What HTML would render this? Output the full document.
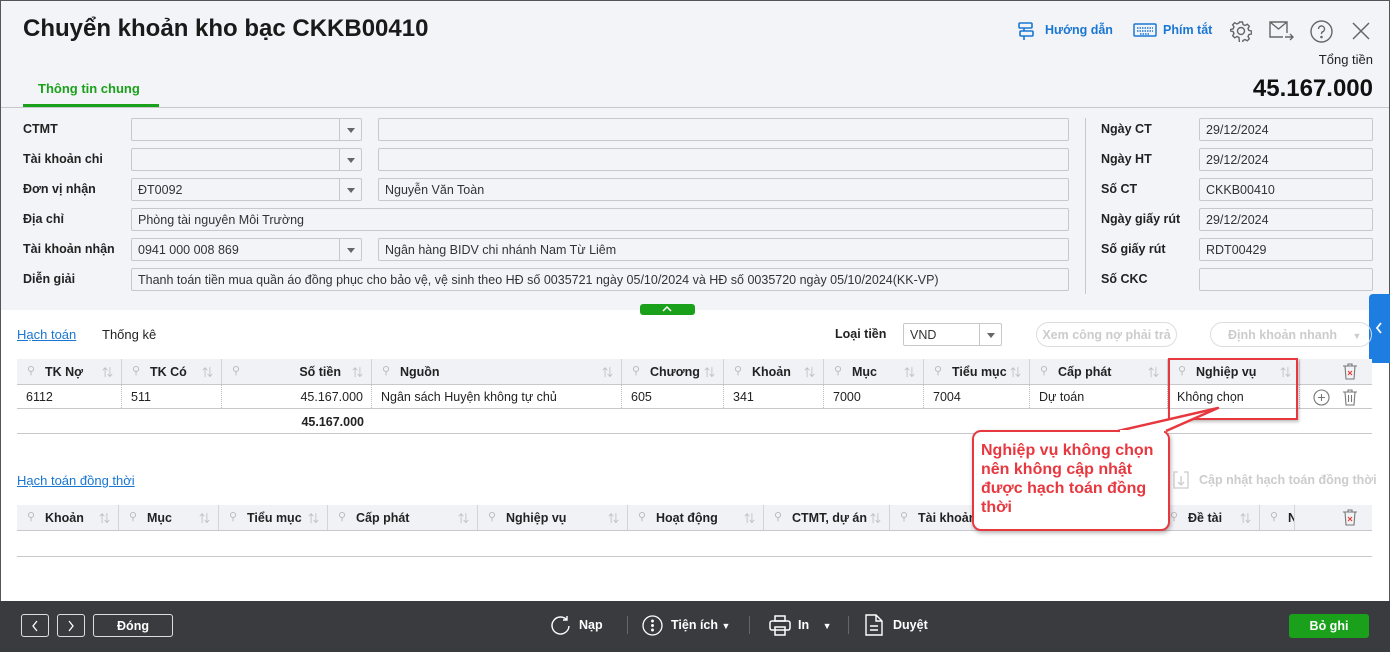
<!DOCTYPE html>
<html><head><meta charset="utf-8">
<style>
*{box-sizing:border-box;margin:0;padding:0}
body{width:1390px;height:652px;overflow:hidden;font-family:"Liberation Sans","Noto Sans CJK SC",sans-serif;font-size:12.5px;color:#222;background:#fff;position:relative}
.a{position:absolute}
.top{left:0;top:0;width:1390px;height:310px;background:#f3f4f8;border-top:1px solid #555;border-left:1px solid #555;border-right:1px solid #555}
.lbl{font-weight:bold;font-size:12.5px;color:#222}
.inp{height:23px;border:1px solid #c8c8cc;border-radius:2px;background:#f3f4f8;padding:4px 6px;font-size:12.5px;color:#333;white-space:nowrap;overflow:hidden}
.combo .arr{position:absolute;right:0;top:0;width:22px;height:21px;border-left:1px solid #c8c8cc}
.combo .arr:after{content:"";position:absolute;left:7px;top:9px;border-left:4px solid transparent;border-right:4px solid transparent;border-top:5px solid #666}
.th{height:26px;background:#f1f2f6;border-bottom:1px solid #c8c8cc;font-weight:bold;font-size:12.5px}
.c{position:absolute;top:0;height:100%;border-right:1px solid #d4d4d8;padding:6px 0 0 28px;white-space:nowrap;overflow:hidden}
.c .pin{position:absolute;left:10px;top:5px;color:#bbb;font-weight:normal;font-size:11px}
.c .srt{position:absolute;right:8px;top:5px;color:#bbb;font-weight:normal;font-size:11px}
.row{height:24px;border-bottom:1px solid #c8c8cc;font-size:12.5px}
.d{position:absolute;top:0;height:100%;border-right:1px dotted #bbb;padding:5px 0 0 9px;white-space:nowrap}
.foot{left:0;top:601px;width:1390px;height:51px;background:#3a3b3f}
.fb{border:1px solid #ddd;border-radius:3px;color:#fff;height:23px;top:614px;text-align:center;font-weight:bold;font-size:12.5px;padding-top:4px}
.ft{color:#fff;font-weight:bold;top:618px;font-size:12.5px}
.sep{top:616px;width:1px;height:18px;background:#666}
</style></head><body>
<div class="a top"></div>
<div class="a" style="left:0;top:0;width:1px;height:601px;background:#555"></div>
<div class="a" style="right:0;top:0;width:1px;height:601px;background:#555"></div>

<div class="a" style="left:23px;top:15px;font-size:24px;font-weight:bold;color:#1a1a1a">Chuyển khoản kho bạc CKKB00410</div>
<svg class="a" style="left:1016px;top:21px" width="20" height="20" viewBox="0 0 20 20" fill="none" stroke="#1976d2" stroke-width="1.6"><rect x="3" y="2" width="13" height="5" rx="1"/><rect x="4" y="10" width="13" height="5" rx="1"/><path d="M8 7v3M8 15v4"/></svg>
<div class="a" style="left:1045px;top:23px;color:#1976d2;font-weight:bold;font-size:12.5px">Hướng dẫn</div>
<svg class="a" style="left:1133px;top:23px" width="24" height="14" viewBox="0 0 24 14" fill="none" stroke="#1976d2" stroke-width="1.5"><rect x="1" y="1" width="22" height="12" rx="1"/><path d="M4 5h16M4 8h16M7 11h10" stroke-dasharray="1.5 1"/></svg>
<div class="a" style="left:1163px;top:23px;color:#1976d2;font-weight:bold;font-size:12.5px">Phím tắt</div>
<svg class="a" style="left:1230px;top:20px" width="22" height="22" viewBox="0 0 22 22" fill="none" stroke="#666" stroke-width="1.4"><circle cx="11" cy="11" r="3.5"/><path d="M9.5 2h3l.5 2.5 2 1 2.3-1.3 2 2-1.3 2.3 1 2 2.5.5v3l-2.5.5-1 2 1.3 2.3-2 2-2.3-1.3-2 1-.5 2.5h-3L9 17.5l-2-1-2.3 1.3-2-2L4 13.5l-1-2L.5 11V9.5L3 9l1-2-1.3-2.3 2-2L7 4l2-1z"/></svg>
<svg class="a" style="left:1269px;top:21px" width="25" height="20" viewBox="0 0 25 20" fill="none" stroke="#666" stroke-width="1.4"><path d="M18 12V1H1v15h13M1 1l8.5 7L18 1M16 16h8M21 13l3 3-3 3"/></svg>
<svg class="a" style="left:1310px;top:20px" width="23" height="23" viewBox="0 0 23 23" fill="none" stroke="#666" stroke-width="1.4"><circle cx="11.5" cy="11.5" r="10.5"/><path d="M8.5 9a3 3 0 1 1 4 2.8c-1 .4-1 1-1 2.2"/><circle cx="11.5" cy="17" r=".6" fill="#666"/></svg>
<svg class="a" style="left:1352px;top:22px" width="18" height="18" viewBox="0 0 18 18" stroke="#666" stroke-width="1.5"><path d="M1 1l16 16M17 1L1 17"/></svg>
<div class="a" style="right:17px;top:52px;font-size:13px">Tổng tiền</div>
<div class="a" style="right:17px;top:75px;font-size:24px;font-weight:bold;color:#111">45.167.000</div>

<div class="a" style="left:38px;top:81px;color:#1aa01a;font-weight:bold;font-size:13px">Thông tin chung</div>
<div class="a" style="left:23px;top:104px;width:136px;height:3px;background:#1aa01a"></div>
<div class="a" style="left:1px;top:107px;width:1388px;height:1px;background:#c8c8cc"></div>

<div class="a lbl" style="left:23px;top:122px">CTMT</div>
<div class="a lbl" style="left:23px;top:152px">Tài khoản chi</div>
<div class="a lbl" style="left:23px;top:182px">Đơn vị nhận</div>
<div class="a lbl" style="left:23px;top:212px">Địa chỉ</div>
<div class="a lbl" style="left:23px;top:242px">Tài khoản nhận</div>
<div class="a lbl" style="left:23px;top:272px">Diễn giải</div>

<div class="a inp combo" style="left:131px;top:118px;width:231px"><span class="arr"></span></div>
<div class="a inp" style="left:378px;top:118px;width:691px"></div>
<div class="a inp combo" style="left:131px;top:148px;width:231px"><span class="arr"></span></div>
<div class="a inp" style="left:378px;top:148px;width:691px"></div>
<div class="a inp combo" style="left:131px;top:178px;width:231px">ĐT0092<span class="arr"></span></div>
<div class="a inp" style="left:378px;top:178px;width:691px">Nguyễn Văn Toàn</div>
<div class="a inp" style="left:131px;top:208px;width:938px">Phòng tài nguyên Môi Trường</div>
<div class="a inp combo" style="left:131px;top:238px;width:231px">0941 000 008 869<span class="arr"></span></div>
<div class="a inp" style="left:378px;top:238px;width:691px">Ngân hàng BIDV chi nhánh Nam Từ Liêm</div>
<div class="a inp" style="left:131px;top:268px;width:938px">Thanh toán tiền mua quần áo đồng phục cho bảo vệ, vệ sinh theo HĐ số 0035721 ngày 05/10/2024 và HĐ số 0035720 ngày 05/10/2024(KK-VP)</div>

<div class="a" style="left:1085px;top:118px;width:1px;height:176px;background:#c8c8cc"></div>
<div class="a lbl" style="left:1101px;top:122px">Ngày CT</div>
<div class="a lbl" style="left:1101px;top:152px">Ngày HT</div>
<div class="a lbl" style="left:1101px;top:182px">Số CT</div>
<div class="a lbl" style="left:1101px;top:212px">Ngày giấy rút</div>
<div class="a lbl" style="left:1101px;top:242px">Số giấy rút</div>
<div class="a lbl" style="left:1101px;top:272px">Số CKC</div>
<div class="a inp" style="left:1199px;top:118px;width:174px">29/12/2024</div>
<div class="a inp" style="left:1199px;top:148px;width:174px">29/12/2024</div>
<div class="a inp" style="left:1199px;top:178px;width:174px">CKKB00410</div>
<div class="a inp" style="left:1199px;top:208px;width:174px">29/12/2024</div>
<div class="a inp" style="left:1199px;top:238px;width:174px">RDT00429</div>
<div class="a inp" style="left:1199px;top:268px;width:174px"></div>

<div class="a" style="left:640px;top:304px;width:55px;height:11px;background:#1aa01a;border-radius:3px"></div>
<svg class="a" style="left:662px;top:305px" width="10" height="8" viewBox="0 0 10 8" fill="none" stroke="#fff" stroke-width="1.5"><path d="M1 6l4-4 4 4"/></svg>
<div class="a" style="left:1369px;top:294px;width:21px;height:69px;background:#1e7de0;border-radius:4px 0 0 4px"></div>
<svg class="a" style="left:1375px;top:322px" width="8" height="12" viewBox="0 0 8 12" fill="none" stroke="#fff" stroke-width="1.8"><path d="M6 1L2 6l4 5"/></svg>

<div class="a" style="left:17px;top:327px;color:#1976d2;text-decoration:underline;font-size:13px">Hạch toán</div>
<div class="a" style="left:102px;top:327px;font-size:13px">Thống kê</div>
<div class="a lbl" style="left:835px;top:327px">Loại tiền</div>
<div class="a inp combo" style="left:903px;top:323px;width:99px;background:#fff">VND<span class="arr"></span></div>
<div class="a" style="left:1036px;top:322px;width:141px;height:25px;border:1px solid #ddd;border-radius:13px;color:#ccc;font-weight:bold;text-align:center;padding-top:5px">Xem công nợ phải trả</div>
<div class="a" style="left:1210px;top:322px;width:162px;height:25px;border:1px solid #ddd;border-radius:13px;color:#ccc;font-weight:bold;padding:5px 0 0 17px">Định khoản nhanh <span style="font-size:9px;margin-left:12px">▼</span></div>

<div class="a th" style="left:17px;top:359px;width:1355px">
<div class="c" style="left:0;width:105px"><span class="pin">⚲</span>TK Nợ<span class="srt">⇅</span></div>
<div class="c" style="left:105px;width:100px"><span class="pin">⚲</span>TK Có<span class="srt">⇅</span></div>
<div class="c" style="left:205px;width:150px;text-align:right;padding-right:30px"><span class="pin">⚲</span>Số tiền<span class="srt">⇅</span></div>
<div class="c" style="left:355px;width:250px"><span class="pin">⚲</span>Nguồn<span class="srt">⇅</span></div>
<div class="c" style="left:605px;width:102px"><span class="pin">⚲</span>Chương<span class="srt">⇅</span></div>
<div class="c" style="left:707px;width:100px"><span class="pin">⚲</span>Khoản<span class="srt">⇅</span></div>
<div class="c" style="left:807px;width:100px"><span class="pin">⚲</span>Mục<span class="srt">⇅</span></div>
<div class="c" style="left:907px;width:106px"><span class="pin">⚲</span>Tiểu mục<span class="srt">⇅</span></div>
<div class="c" style="left:1013px;width:138px"><span class="pin">⚲</span>Cấp phát<span class="srt">⇅</span></div>
<div class="c" style="left:1151px;width:132px"><span class="pin">⚲</span>Nghiệp vụ<span class="srt">⇅</span></div>
</div>
<div class="a row" style="left:17px;top:385px;width:1355px">
<div class="d" style="left:0;width:105px">6112</div>
<div class="d" style="left:105px;width:100px">511</div>
<div class="d" style="left:205px;width:150px;text-align:right;padding-right:8px">45.167.000</div>
<div class="d" style="left:355px;width:250px">Ngân sách Huyện không tự chủ</div>
<div class="d" style="left:605px;width:102px">605</div>
<div class="d" style="left:707px;width:100px">341</div>
<div class="d" style="left:807px;width:100px">7000</div>
<div class="d" style="left:907px;width:106px">7004</div>
<div class="d" style="left:1013px;width:138px">Dự toán</div>
<div class="d" style="left:1151px;width:132px">Không chọn</div>
</div>
<div class="a" style="left:17px;top:409px;width:1355px;height:25px;border-bottom:1px solid #c8c8cc"><div class="a" style="left:205px;width:142px;text-align:right;top:6px;font-weight:bold">45.167.000</div></div>

<svg class="a" style="left:1342px;top:363px" width="16" height="17" viewBox="0 0 16 17" fill="none" stroke="#777" stroke-width="1.1"><path d="M1 3h14M6 3V1h4v2M3 3l1 13h8l1-13"/><path d="M6 8l4 4M10 8l-4 4" stroke="#e53935"/></svg>
<svg class="a" style="left:1313px;top:389px" width="17" height="17" viewBox="0 0 17 17" fill="none" stroke="#777" stroke-width="1.1"><circle cx="8.5" cy="8.5" r="7.5"/><path d="M8.5 5v7M5 8.5h7"/></svg>
<svg class="a" style="left:1342px;top:389px" width="16" height="17" viewBox="0 0 16 17" fill="none" stroke="#777" stroke-width="1.1"><path d="M1 3h14M6 3V1h4v2M3 3l1 13h8l1-13M6.5 6v7M9.5 6v7"/></svg>

<div class="a" style="left:17px;top:473px;color:#1976d2;text-decoration:underline;font-size:13px">Hạch toán đồng thời</div>
<svg class="a" style="left:1172px;top:470px" width="18" height="20" viewBox="0 0 18 20" fill="none" stroke="#ccc" stroke-width="1.3"><path d="M6 2H2v16h14V2h-4M9 6v9M6 12l3 3 3-3"/></svg>
<div class="a" style="left:1199px;top:473px;color:#ccc;font-weight:bold">Cập nhật hạch toán đồng thời</div>

<div class="a th" style="left:17px;top:505px;width:1355px">
<div class="c" style="left:0;width:102px"><span class="pin">⚲</span>Khoản<span class="srt">⇅</span></div>
<div class="c" style="left:102px;width:100px"><span class="pin">⚲</span>Mục<span class="srt">⇅</span></div>
<div class="c" style="left:202px;width:109px"><span class="pin">⚲</span>Tiểu mục<span class="srt">⇅</span></div>
<div class="c" style="left:311px;width:150px"><span class="pin">⚲</span>Cấp phát<span class="srt">⇅</span></div>
<div class="c" style="left:461px;width:150px"><span class="pin">⚲</span>Nghiệp vụ<span class="srt">⇅</span></div>
<div class="c" style="left:611px;width:136px"><span class="pin">⚲</span>Hoạt động<span class="srt">⇅</span></div>
<div class="c" style="left:747px;width:126px"><span class="pin">⚲</span>CTMT, dự án<span class="srt">⇅</span></div>
<div class="c" style="left:873px;width:270px"><span class="pin">⚲</span>Tài khoản</div>
<div class="c" style="left:1143px;width:100px"><span class="pin">⚲</span>Đề tài<span class="srt">⇅</span></div>
<div class="c" style="left:1243px;width:35px"><span class="pin">⚲</span>N</div>
</div>
<svg class="a" style="left:1342px;top:509px" width="16" height="17" viewBox="0 0 16 17" fill="none" stroke="#777" stroke-width="1.1"><path d="M1 3h14M6 3V1h4v2M3 3l1 13h8l1-13"/><path d="M6 8l4 4M10 8l-4 4" stroke="#e53935"/></svg>
<div class="a" style="left:17px;top:556px;width:1355px;height:1px;background:#c8c8cc"></div>

<!-- annotation -->
<div class="a" style="left:1168px;top:358px;width:130px;height:62px;border:2.5px solid #e8383f;box-shadow:1px 2px 3px rgba(0,0,0,.25)"></div>
<div class="a" style="left:972px;top:430px;width:198px;height:101px;background:#fff;border:2.5px solid #e8383f;border-radius:9px;box-shadow:1px 2px 4px rgba(0,0,0,.3)"></div>
<svg class="a" style="left:1100px;top:400px" width="130" height="45" viewBox="0 0 130 45"><path d="M18 31 L118 8 L66 31" fill="#fff" stroke="#e8383f" stroke-width="2.5" stroke-linejoin="round"/><rect x="20" y="30" width="44" height="6" fill="#fff"/></svg>
<div class="a" style="left:981px;top:441px;width:176px;color:#e8383f;font-weight:bold;font-size:16px;line-height:19px">Nghiệp vụ không chọn nên không cập nhật được hạch toán đồng thời</div>

<div class="a foot"></div>
<div class="a fb" style="left:21px;width:28px"></div>
<svg class="a" style="left:31px;top:620px" width="8" height="12" viewBox="0 0 8 12" fill="none" stroke="#fff" stroke-width="1.3"><path d="M6 1L2 6l4 5"/></svg>
<div class="a fb" style="left:57px;width:28px"></div>
<svg class="a" style="left:67px;top:620px" width="8" height="12" viewBox="0 0 8 12" fill="none" stroke="#fff" stroke-width="1.3"><path d="M2 1l4 5-4 5"/></svg>
<div class="a fb" style="left:93px;width:80px">Đóng</div>

<svg class="a" style="left:550px;top:615px" width="21" height="21" viewBox="0 0 21 21" fill="none" stroke="#fff" stroke-width="1.4"><path d="M17 5A8.5 8.5 0 1 0 19 11M17 1v4h-4"/></svg>
<div class="a ft" style="left:579px">Nạp</div>
<div class="a sep" style="left:627px"></div>
<svg class="a" style="left:642px;top:615px" width="21" height="21" viewBox="0 0 21 21" fill="none" stroke="#fff" stroke-width="1.3"><circle cx="10.5" cy="10.5" r="9.5"/><circle cx="10.5" cy="6" r=".8" fill="#fff"/><circle cx="10.5" cy="10.5" r=".8" fill="#fff"/><circle cx="10.5" cy="15" r=".8" fill="#fff"/></svg>
<div class="a ft" style="left:671px">Tiện ích <span style="font-size:9px">▼</span></div>
<div class="a sep" style="left:749px"></div>
<svg class="a" style="left:769px;top:615px" width="22" height="21" viewBox="0 0 22 21" fill="none" stroke="#fff" stroke-width="1.5"><rect x="6" y="1" width="10" height="5"/><rect x="1" y="6" width="20" height="9" rx="2"/><rect x="6" y="12" width="10" height="8"/></svg>
<div class="a ft" style="left:798px">In <span style="font-size:9px;margin-left:10px">▼</span></div>
<div class="a sep" style="left:848px"></div>
<svg class="a" style="left:865px;top:614px" width="18" height="22" viewBox="0 0 18 22" fill="none" stroke="#fff" stroke-width="1.4"><path d="M1 1h10l6 6v14H1zM11 1v6h6M5 12h8M5 16h8"/></svg>
<div class="a ft" style="left:893px">Duyệt</div>

<div class="a" style="left:1289px;top:614px;width:80px;height:24px;background:#1aa01a;border-radius:3px;color:#fff;font-weight:bold;text-align:center;padding-top:5px">Bỏ ghi</div>
</body></html>
